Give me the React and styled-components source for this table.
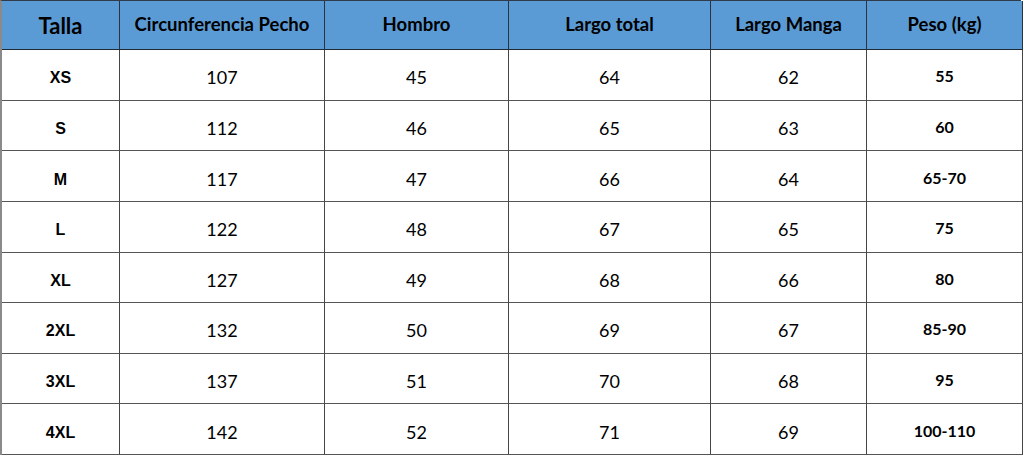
import React from 'react';
import styled, { createGlobalStyle } from 'styled-components';

const GlobalStyle = createGlobalStyle`
  body {
    margin: 0;
    background: #ffffff;
  }
`;

const headers = ['Talla', 'Circunferencia Pecho', 'Hombro', 'Largo total', 'Largo Manga', 'Peso (kg)'];

const rows = [
  ['XS', '107', '45', '64', '62', '55'],
  ['S', '112', '46', '65', '63', '60'],
  ['M', '117', '47', '66', '64', '65-70'],
  ['L', '122', '48', '67', '65', '75'],
  ['XL', '127', '49', '68', '66', '80'],
  ['2XL', '132', '50', '69', '67', '85-90'],
  ['3XL', '137', '51', '70', '68', '95'],
  ['4XL', '142', '52', '71', '69', '100-110'],
];

const SizeTable = () => {
  return (
    <Grid>
      {headers.map((h, i) => (
        <HeadCell key={h} big={i === 0}>{h}</HeadCell>
      ))}
      {rows.map((row) =>
        row.map((value, i) => (
          <Cell key={row[0] + i} kind={i === 0 ? 'size' : i === 5 ? 'weight' : 'plain'}>
            {value}
          </Cell>
        ))
      )}
    </Grid>
  );
};

const App = () => (
  <>
    <GlobalStyle />
    <SizeTable />
  </>
);

const Grid = styled.div`
  display: grid;
  grid-template-columns: 118px 205px 184px 202px 156px 156px;
  grid-template-rows: 49px repeat(8, 1fr);
  width: 1021px;
  height: 455px;
  box-sizing: border-box;
  border-left: 2px solid #8a8a8a;
  border-top: 1px solid #2f3b48;
`;

const HeadCell = styled.div`
  display: flex;
  align-items: center;
  justify-content: center;
  background: #5b9bd5;
  border-right: 1px solid #2a3440;
  border-bottom: 1px solid #1f2933;
  font-family: Lato, "Liberation Sans", sans-serif;
  font-weight: 700;
  font-size: ${({ big }) => (big ? '22px' : '18.5px')};
  color: #000000;
  padding-bottom: ${({ big }) => (big ? '0' : '3px')};
  white-space: nowrap;
`;

const Cell = styled.div`
  display: flex;
  align-items: center;
  justify-content: center;
  background: #ffffff;
  border-right: 1px solid #454545;
  border-bottom: 1px solid #555555;
  color: #000000;
  font-family: ${({ kind }) => (kind === 'size' ? '"Liberation Sans", Arial, sans-serif' : 'Lato, "Liberation Sans", sans-serif')};
  font-weight: ${({ kind }) => (kind === 'plain' ? 400 : 700)};
  font-size: ${({ kind }) => (kind === 'plain' ? '18px' : '16px')};
  padding-top: ${({ kind }) => (kind === 'size' ? '7px' : kind === 'weight' ? '2px' : '5px')};
`;

export default App;
